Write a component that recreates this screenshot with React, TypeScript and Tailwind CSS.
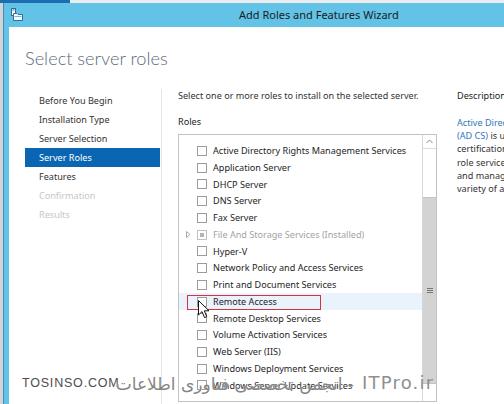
import React from "react";

const navItems: { label: string; state: "normal" | "active" | "disabled" }[] = [
  { label: "Before You Begin", state: "normal" },
  { label: "Installation Type", state: "normal" },
  { label: "Server Selection", state: "normal" },
  { label: "Server Roles", state: "active" },
  { label: "Features", state: "normal" },
  { label: "Confirmation", state: "disabled" },
  { label: "Results", state: "disabled" },
];

const roles: { label: string; installed?: boolean; expander?: boolean; hover?: boolean }[] = [
  { label: "Active Directory Rights Management Services" },
  { label: "Application Server" },
  { label: "DHCP Server" },
  { label: "DNS Server" },
  { label: "Fax Server" },
  { label: "File And Storage Services (Installed)", installed: true, expander: true },
  { label: "Hyper-V" },
  { label: "Network Policy and Access Services" },
  { label: "Print and Document Services" },
  { label: "Remote Access", hover: true },
  { label: "Remote Desktop Services" },
  { label: "Volume Activation Services" },
  { label: "Web Server (IIS)" },
  { label: "Windows Deployment Services" },
  { label: "Windows Server Update Services" },
];

function TitleIcon() {
  return (
    <svg width="14" height="14" viewBox="0 0 14 14" className="shrink-0">
      <rect x="1.5" y="0.5" width="4" height="7" fill="#f4fbff" stroke="#2f6f9a" strokeWidth="1" />
      <rect x="2.5" y="1.5" width="2" height="1" fill="#2f6f9a" />
      <path d="M3.5 5.5 H7 L8 6.5 H12.5 V12.5 H3.5 Z" fill="#f4fbff" stroke="#2f6f9a" strokeWidth="1" />
      <rect x="4.5" y="8" width="7" height="1" fill="#7fb4d6" />
    </svg>
  );
}

function Cursor() {
  return (
    <svg width="12" height="19" viewBox="0 0 12 19" className="absolute left-[198px] top-[300px]">
      <path
        d="M0.5 0.5 L0.5 15 L4 11.6 L6.6 17.6 L8.8 16.7 L6.3 10.8 L11 10.8 Z"
        fill="#ffffff"
        stroke="#111111"
        strokeWidth="1"
        strokeLinejoin="round"
      />
    </svg>
  );
}

export default function App() {
  return (
    <div className="relative w-[504px] h-[404px] overflow-hidden bg-[#e4e4e4] font-['Noto_Sans',sans-serif] text-[9.1px] text-[#262626]">
      {/* desktop strip behind window */}
      <div className="flex h-[3px]">
        <div className="w-[70px] shrink-0 bg-[#1d6db3]" />
        <div className="flex-1 bg-[#ececec]" />
      </div>
      <div className="flex h-[401px]">
        <div className="w-[3px] shrink-0 bg-[#d4d4d4]" />
        {/* window */}
        <div className="flex min-w-0 flex-1 flex-col border-l border-[#3b8fbd] bg-[#62c3e7]">
          {/* title bar */}
          <div className="flex h-[24px] shrink-0 items-center pl-[6px]">
            <TitleIcon />
            <div className="whitespace-nowrap pl-[215px] font-['Noto_Sans',sans-serif] text-[11px] text-[#1b1b1b]">
              Add Roles and Features Wizard
            </div>
          </div>
          {/* content */}
          <div className="ml-[5px] flex min-w-0 flex-1 flex-col overflow-hidden bg-white pl-[16px] pt-[19px]">
            <div className="h-[24px] whitespace-nowrap font-['Lato',sans-serif] text-[18.2px] font-light leading-[24px] text-[#5a6b7d]">
              Select server roles
            </div>
            <div className="mt-[19px] flex flex-1">
              {/* nav */}
              <div className="w-[137px] shrink-0 border-r border-[#e6e6e6] pt-[1.5px]">
                {navItems.map((n) => (
                  <div
                    key={n.label}
                    className={
                      n.state === "active"
                        ? "mr-[1px] h-[19px] bg-[#0a66b2] pl-[14px] leading-[19px] text-white"
                        : n.state === "disabled"
                        ? "h-[19px] pl-[14px] leading-[19px] text-[#c6c6c6]"
                        : "h-[19px] pl-[14px] leading-[19px] text-[#333333]"
                    }
                  >
                    {n.label}
                  </div>
                ))}
              </div>
              {/* main */}
              <div className="ml-[16px] flex w-[259px] shrink-0 flex-col">
                <div className="h-[14px] whitespace-nowrap leading-[14px] text-[#333333]">
                  Select one or more roles to install on the selected server.
                </div>
                <div className="mt-[12px] h-[14px] leading-[14px] text-[#1e1e1e]">Roles</div>
                <div className="mt-[5px] flex h-[268px] border border-[#c3c3c3]">
                  <div className="flex-1 pt-[7.5px]">
                    {roles.map((r) => (
                      <div
                        key={r.label}
                        className={
                          r.hover
                            ? "relative flex h-[16.75px] items-center bg-[#eaf2fc]"
                            : "relative flex h-[16.75px] items-center"
                        }
                      >
                        <div className="flex w-[18px] justify-center">
                          {r.expander ? (
                            <svg width="5" height="7" viewBox="0 0 5 7">
                              <path d="M0.5 0.5 L4 3.5 L0.5 6.5 Z" fill="none" stroke="#a8a8a8" strokeWidth="1" />
                            </svg>
                          ) : null}
                        </div>
                        <div
                          className={
                            r.installed
                              ? "flex h-[10px] w-[10px] items-center justify-center border border-[#c2c2c2] bg-white"
                              : "h-[10px] w-[10px] border border-[#9c9c9c] bg-white"
                          }
                        >
                          {r.installed ? <div className="h-[4px] w-[4px] bg-[#b5b5b5]" /> : null}
                        </div>
                        <div
                          className={
                            r.installed
                              ? "ml-[6px] whitespace-nowrap text-[#a3a3a3]"
                              : "ml-[6px] whitespace-nowrap text-[#1e1e1e]"
                          }
                        >
                          {r.label}
                        </div>
                        {r.hover ? (
                          <div className="absolute left-[8px] top-[1.5px] h-[15.5px] w-[134px] border-[1.5px] border-[#d0353f]" />
                        ) : null}
                      </div>
                    ))}
                  </div>
                  {/* scrollbar */}
                  <div className="flex w-[14px] flex-col border-l border-[#d6d6d6] bg-white">
                    <div className="flex h-[14px] items-center justify-center border-b border-[#dcdcdc]">
                      <svg width="7" height="5" viewBox="0 0 7 5">
                        <path d="M0.5 4 L3.5 1 L6.5 4" fill="none" stroke="#8a8a8a" strokeWidth="1" />
                      </svg>
                    </div>
                    <div className="h-[48px]" />
                    <div className="flex h-[187px] items-center justify-center border-y border-[#c4c4c4] bg-[#d3d3d3]">
                      <div className="flex w-[6px] flex-col gap-[1px]">
                        <div className="h-[1px] bg-[#777777]" />
                        <div className="h-[1px] bg-[#777777]" />
                        <div className="h-[1px] bg-[#777777]" />
                      </div>
                    </div>
                    <div className="flex-1" />
                  </div>
                </div>
              </div>
              {/* description */}
              <div className="ml-[20px] flex min-w-0 flex-col overflow-hidden whitespace-nowrap">
                <div className="h-[14px] leading-[14px] text-[#1e1e1e]">Description</div>
                <div className="mt-[13px] leading-[13.2px] text-[#333333]">
                  <div className="text-[#2b78bd]">Active Directory Certificate Services</div>
                  <div>
                    <span className="text-[#2b78bd]">(AD CS)</span> is used to create
                  </div>
                  <div>certification authorities and related</div>
                  <div>role services that allow you to issue</div>
                  <div>and manage certificates used in a</div>
                  <div>variety of applications.</div>
                </div>
              </div>
            </div>
          </div>
        </div>
      </div>

      <Cursor />

      {/* watermark */}
      <div className="absolute left-[22px] top-[375px] font-['Liberation_Sans',sans-serif] text-[12.5px] leading-[16px] tracking-[0.8px] text-[#4d4d4d] [text-shadow:0_0_2px_#ffffff]">
        TOSINSO.COM
      </div>
      <div
        dir="rtl"
        className="absolute right-[150px] top-[374px] whitespace-nowrap font-['DejaVu_Sans',sans-serif] text-[17px] leading-[20px] text-[#858585] [text-shadow:0_0_1px_#ffffff]"
      >
        - انجمن تخصصی فناوری اطلاعات
      </div>
      <div className="absolute left-[362px] top-[372px] font-['DejaVu_Sans',sans-serif] text-[18px] leading-[22px] tracking-[1.2px] text-[#8f8f8f]">
        ITPro.ir
      </div>
    </div>
  );
}
